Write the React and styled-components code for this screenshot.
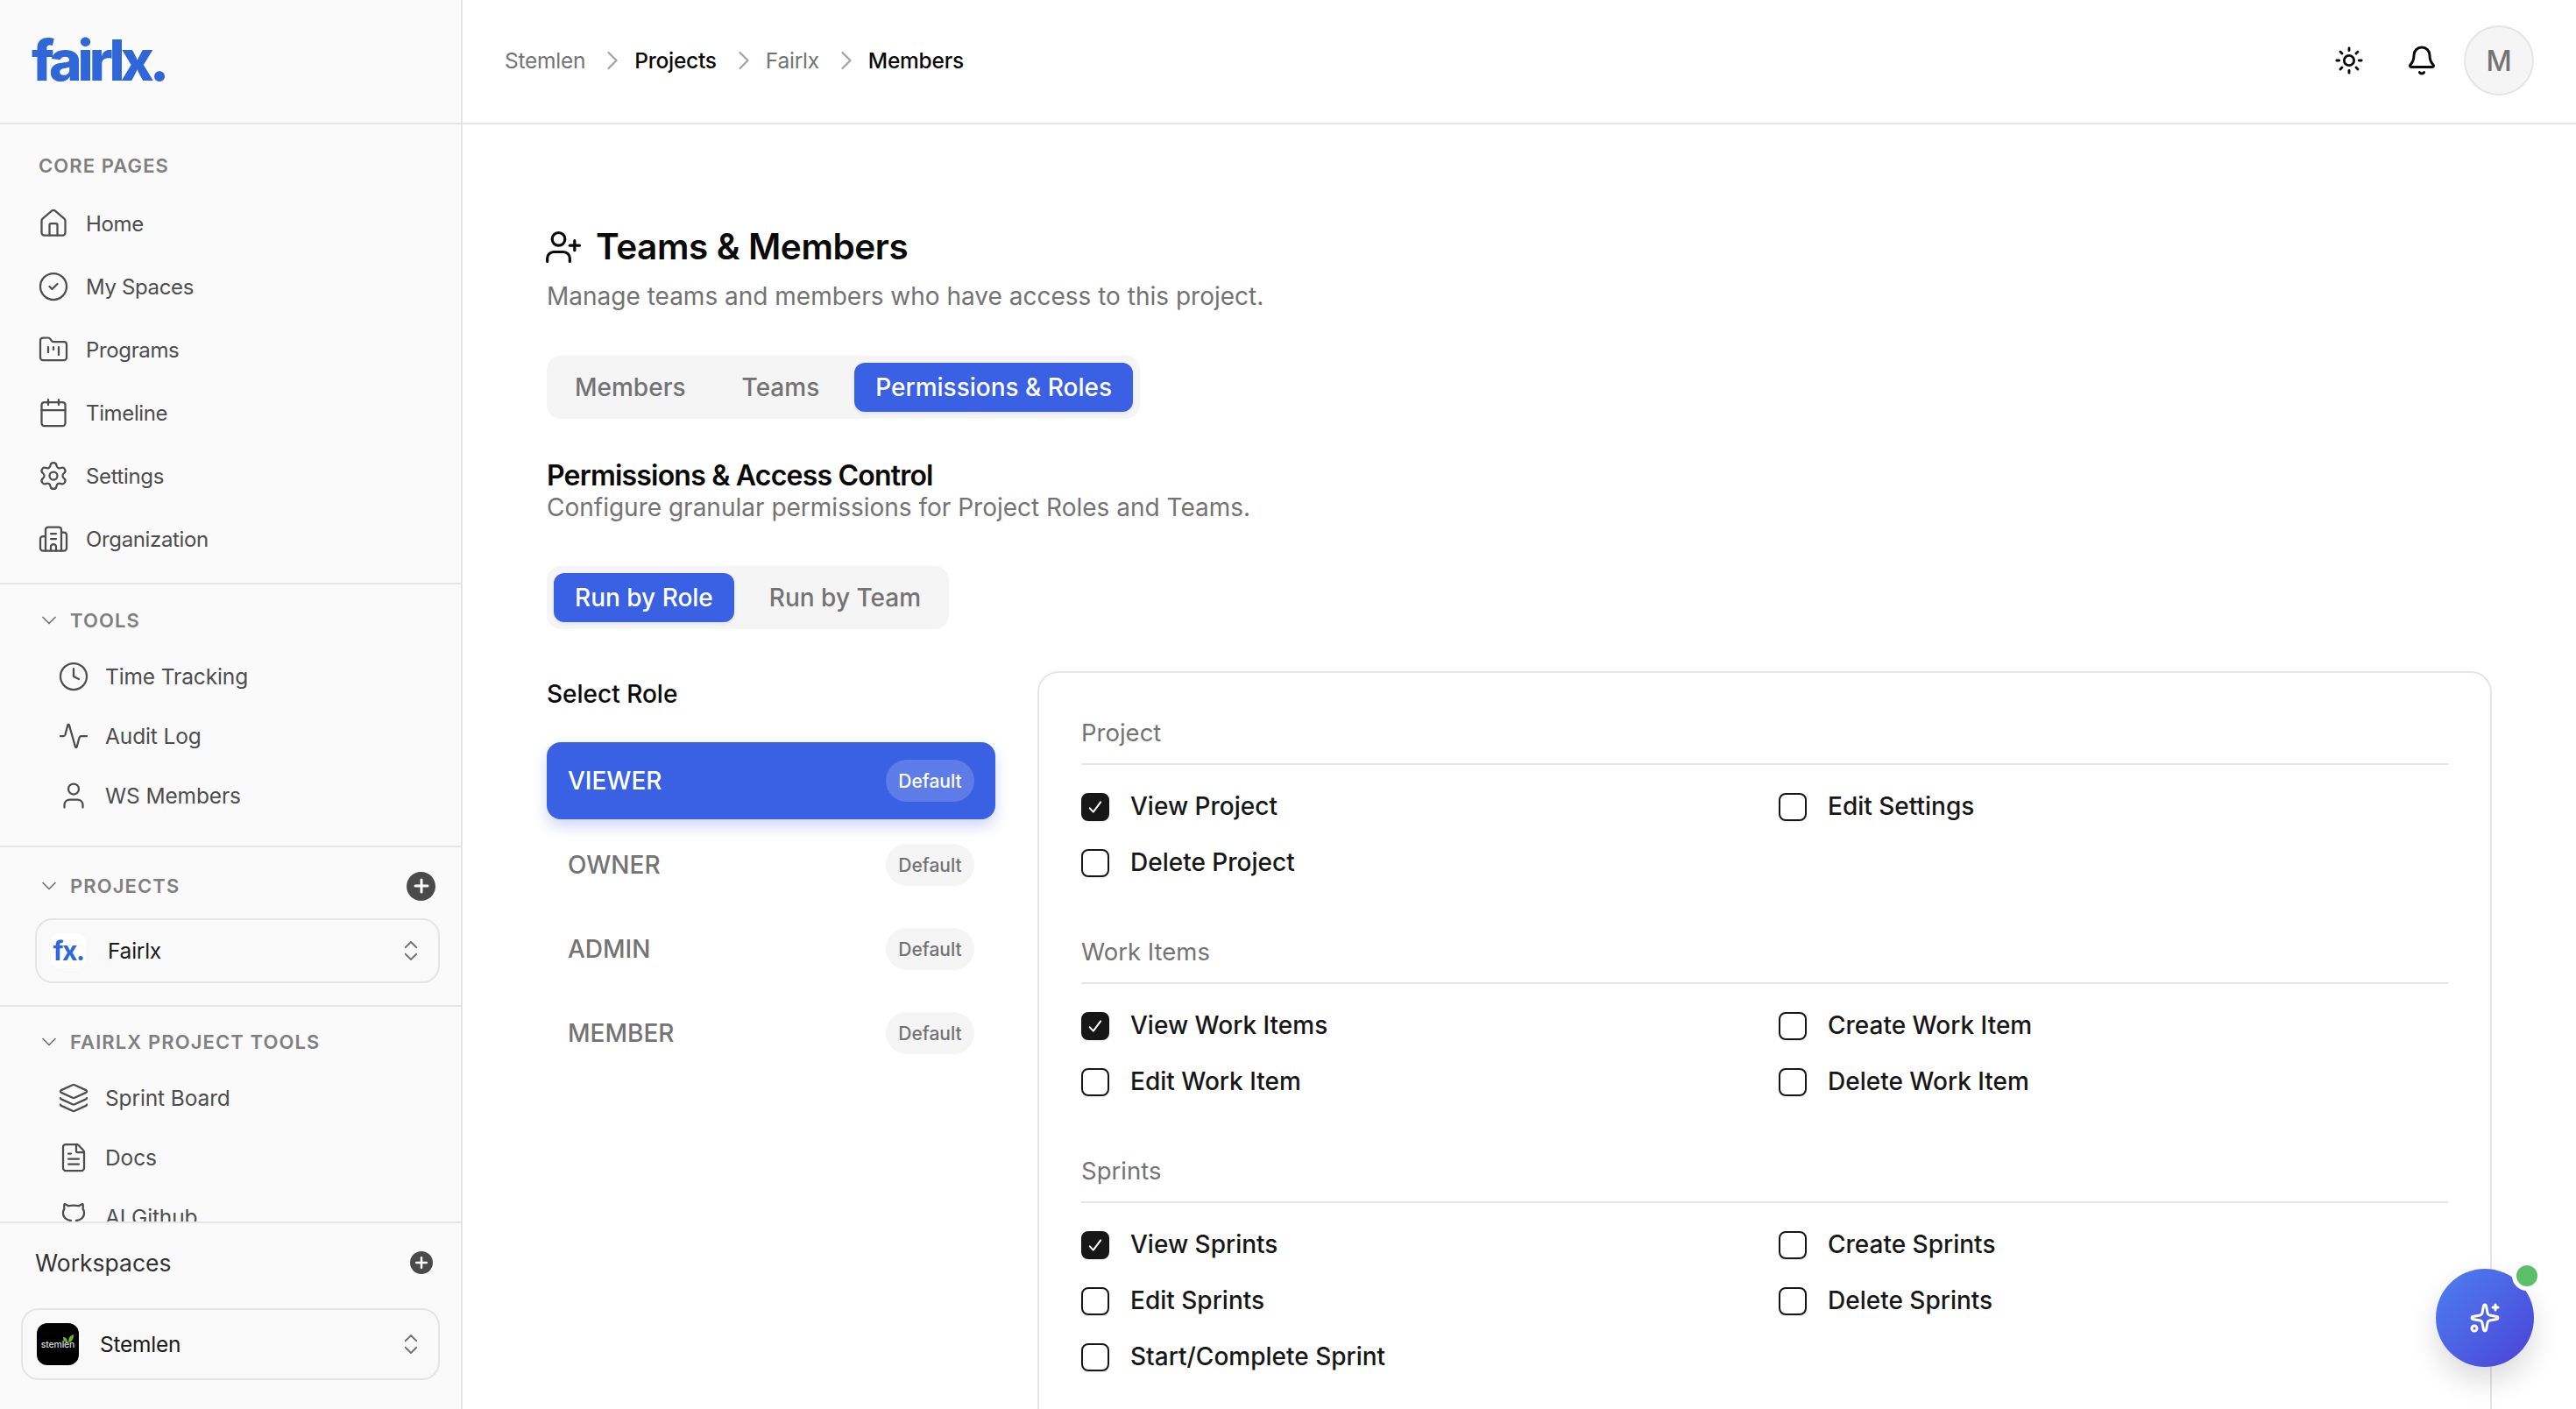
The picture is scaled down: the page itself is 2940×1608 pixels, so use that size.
import styled, { createGlobalStyle } from "styled-components";
import {
  House,
  CircleCheck,
  FolderKanban,
  Calendar,
  Settings,
  Building2,
  Clock,
  User,
  Layers,
  FileText,
  ChevronDown,
  ChevronRight,
  ChevronsUpDown,
  Plus,
  Sun,
  Bell,
  UserPlus,
  Sparkles,
} from "lucide-react";

const GlobalStyle = createGlobalStyle`
  * { box-sizing: border-box; }
  html, body { margin: 0; height: 100%; overflow: hidden; background: #fff; }
  body {
    font-family: Inter, "Noto Sans", "Liberation Sans", sans-serif;
    color: #0a0a0a;
    -webkit-font-smoothing: antialiased;
  }
`;

const Shell = styled.div`
  display: flex;
  height: 100vh;
  overflow: hidden;
  position: relative;
`;

/* sidebar */
const Sidebar = styled.aside`
  width: 528px;
  flex-shrink: 0;
  display: flex;
  flex-direction: column;
  background: #fafafa;
  border-right: 2px solid #e5e5e5;
`;

const LogoBar = styled.div`
  height: 142px;
  flex-shrink: 0;
  display: flex;
  align-items: center;
  padding: 0 0 2px 36px;
  border-bottom: 2px solid #e5e5e5;
`;

const Logo = styled.span`
  font-size: 64px;
  line-height: 1;
  font-weight: 800;
  letter-spacing: -0.078em;
  color: #2f66d8;
`;

const SideScroll = styled.div`
  flex: 1;
  min-height: 0;
  overflow: hidden;
`;

const NavSection = styled.section`
  padding: ${(p) => p.$pad};
  border-bottom: ${(p) => (p.$last ? "none" : "2px solid #e5e5e5")};
`;

const SectionHead = styled.div`
  display: flex;
  align-items: center;
  gap: 10px;
  height: 32px;
  padding: 0 ${(p) => (p.$plain ? "44px" : "29px")} 0 ${(p) => (p.$plain ? "44px" : "42px")};
  margin-bottom: ${(p) => p.$mb || "14px"};
  font-size: 22px;
  font-weight: 600;
  letter-spacing: 0.05em;
  color: #7f7f7f;
  text-transform: uppercase;
  svg { color: #737373; }
`;

const SectionTitle = styled.span`
  flex: 1;
`;

const RoundPlus = styled.span`
  width: ${(p) => p.$size}px;
  height: ${(p) => p.$size}px;
  border-radius: 50%;
  background: #4a4a4a;
  display: flex;
  align-items: center;
  justify-content: center;
  flex-shrink: 0;
  && svg { color: #fff; }
`;

const NavItem = styled.div`
  display: flex;
  align-items: center;
  height: ${(p) => (p.$nested ? "68px" : "72px")};
  padding-left: ${(p) => (p.$nested ? "66px" : "43px")};
  gap: ${(p) => (p.$nested ? "18px" : "19px")};
  font-size: ${(p) => (p.$nested ? "24.5px" : "24px")};
  letter-spacing: ${(p) => (p.$nested ? "-0.005em" : "-0.015em")};
  color: #4d4d4d;
  svg { flex-shrink: 0; color: #4d4d4d; }
`;

const Picker = styled.div`
  display: flex;
  align-items: center;
  margin: ${(p) => p.$margin};
  height: ${(p) => p.$height}px;
  padding: 0 16px;
  background: #f9f9f9;
  border: 2px solid #e5e5e5;
  border-radius: 20px;
  font-size: 24.5px;
  letter-spacing: -0.01em;
  color: #1a1a1a;
  svg { color: #737373; flex-shrink: 0; }
`;

const PickerName = styled.span`
  flex: 1;
`;

const ProjectTile = styled.span`
  width: 40px;
  height: 40px;
  margin-right: 25px;
  border-radius: 10px;
  background: #fff;
  color: #2f66d8;
  font-size: 30px;
  font-weight: 700;
  letter-spacing: -0.05em;
  display: flex;
  align-items: center;
  justify-content: center;
`;

const WorkspaceTile = styled.span`
  width: 48px;
  height: 48px;
  margin-right: 24px;
  border-radius: 12px;
  background: #000;
  color: #d9d9d9;
  font-size: 10.5px;
  font-weight: 500;
  letter-spacing: -0.02em;
  display: flex;
  align-items: center;
  justify-content: center;
  position: relative;
  svg { position: absolute; top: 13px; right: 5px; color: #6cb52d; }
`;

const Footer = styled.div`
  height: 214px;
  flex-shrink: 0;
  background: #fafafa;
  border-top: 2px solid #e5e5e5;
`;

const FooterHead = styled.div`
  display: flex;
  align-items: center;
  justify-content: space-between;
  height: 40px;
  margin: 25px 32px 32px 40px;
  font-size: 26.5px;
  color: #333;
`;

/* main */
const Main = styled.main`
  flex: 1;
  min-width: 0;
  display: flex;
  flex-direction: column;
`;

const TopBar = styled.header`
  height: 142px;
  flex-shrink: 0;
  display: flex;
  align-items: center;
  padding: 0 48px 2px 48px;
  border-bottom: 2px solid #e5e5e5;
`;

const Crumbs = styled.nav`
  flex: 1;
  display: flex;
  align-items: center;
  gap: 10px;
  font-size: 24.5px;
  letter-spacing: -0.01em;
  svg { color: #a3a3a3; margin: 0 -3px 0 3px; }
`;

const Crumb = styled.span`
  color: ${(p) => (p.$strong ? "#0a0a0a" : "#737373")};
  font-weight: ${(p) => (p.$strong ? 500 : 400)};
`;

const TopActions = styled.div`
  display: flex;
  align-items: center;
  svg { color: #0a0a0a; }
`;

const IconSlot = styled.span`
  display: flex;
  margin-right: ${(p) => p.$mr}px;
`;

const Avatar = styled.span`
  width: 80px;
  height: 80px;
  border-radius: 50%;
  background: #f5f5f5;
  border: 2px solid #e5e5e5;
  color: #737373;
  font-size: 32px;
  font-weight: 500;
  display: flex;
  align-items: center;
  justify-content: center;
`;

const Content = styled.div`
  flex: 1;
  min-height: 0;
  overflow: hidden;
  padding: 112px 96px 0;
`;

const PageTitle = styled.h1`
  display: flex;
  align-items: center;
  gap: 15px;
  margin: 0;
  height: 56px;
  font-size: 40.5px;
  line-height: 56px;
  font-weight: 600;
  letter-spacing: -0.01em;
  svg { margin-left: -3px; }
`;

const PageSub = styled.p`
  margin: 8px 0 0;
  font-size: 28px;
  line-height: 40px;
  color: #737373;
`;

const Segments = styled.div`
  display: inline-flex;
  align-items: center;
  height: 72px;
  padding: 0 8px;
  gap: 16px;
  margin-top: ${(p) => p.$mt}px;
  border-radius: 16px;
  background: #f5f5f5;
  vertical-align: top;
`;

const Segment = styled.span`
  height: 56px;
  display: flex;
  align-items: center;
  padding: 0 24px;
  border-radius: 12px;
  font-size: 28px;
  font-weight: 500;
  color: ${(p) => (p.$active ? "#fff" : "#737373")};
  background: ${(p) => (p.$active ? "#3a60e3" : "transparent")};
  box-shadow: ${(p) => (p.$active ? "0 2px 4px rgba(0,0,0,.08)" : "none")};
`;

const BlockTitle = styled.h2`
  margin: 47px 0 0;
  font-size: 32px;
  line-height: 36px;
  font-weight: 600;
  letter-spacing: -0.025em;
`;

const BlockSub = styled.p`
  margin: 0;
  font-size: 28px;
  line-height: 37px;
  color: #737373;
`;

const Columns = styled.div`
  display: grid;
  grid-template-columns: 512px 1fr;
  gap: 48px;
  margin-top: 48px;
  align-items: start;
`;

const RoleColumn = styled.div`
  padding-top: 6px;
`;

const RoleHeading = styled.div`
  font-size: 28px;
  line-height: 40px;
  font-weight: 500;
  margin-bottom: 35px;
`;

const RoleList = styled.div`
  display: flex;
  flex-direction: column;
  gap: 8px;
`;

const RoleRow = styled.div`
  height: 88px;
  display: flex;
  align-items: center;
  justify-content: space-between;
  padding: 0 24px;
  border-radius: 16px;
  font-size: 28px;
  font-weight: 500;
  color: ${(p) => (p.$active ? "#fff" : "#737373")};
  background: ${(p) => (p.$active ? "#3a60e3" : "transparent")};
  box-shadow: ${(p) => (p.$active ? "0 8px 16px rgba(58,96,227,.25)" : "none")};
`;

const Badge = styled.span`
  height: 48px;
  width: 101px;
  display: flex;
  align-items: center;
  justify-content: center;
  border-radius: 24px;
  font-size: 21px;
  font-weight: 500;
  color: ${(p) => (p.$active ? "#fff" : "#737373")};
  background: ${(p) => (p.$active ? "rgba(255,255,255,.18)" : "#f5f5f5")};
`;

const Panel = styled.div`
  padding: 48px 48px 60px;
  border: 2px solid #e5e5e5;
  border-radius: 24px;
  background: #fff;
`;

const Group = styled.div`
  margin-bottom: 62px;
`;

const GroupTitle = styled.div`
  padding-bottom: 15px;
  border-bottom: 2px solid #e5e5e5;
  margin-bottom: 27px;
  font-size: 27.5px;
  line-height: 40px;
  color: #737373;
`;

const PermGrid = styled.div`
  display: grid;
  grid-template-columns: 1fr 1fr;
  column-gap: 32px;
  row-gap: 24px;
`;

const Perm = styled.label`
  display: flex;
  align-items: center;
  gap: 24px;
  height: 40px;
  font-size: 28px;
  font-weight: 500;
  color: #171717;
`;

const Box = styled.span`
  width: 32px;
  height: 32px;
  margin-top: 2px;
  border-radius: 8px;
  border: 2.5px solid #171717;
  background: ${(p) => (p.$on ? "#171717" : "#fff")};
  color: #fff;
  box-shadow: 0 1px 2px rgba(0, 0, 0, 0.1);
  display: flex;
  align-items: center;
  justify-content: center;
  flex-shrink: 0;
`;

const Fab = styled.button`
  position: absolute;
  left: 2780px;
  top: 1448px;
  width: 112px;
  height: 112px;
  padding: 0;
  border: 0;
  border-radius: 50%;
  color: #fff;
  background: linear-gradient(135deg, #4f80f1, #4a43d6);
  box-shadow: 0 16px 32px rgba(0, 0, 0, 0.14);
  display: flex;
  align-items: center;
  justify-content: center;
`;

const FabDot = styled.span`
  position: absolute;
  right: -9px;
  top: -9px;
  width: 34px;
  height: 34px;
  border-radius: 50%;
  background: #5cc06b;
  border: 5px solid #fff;
`;

const ico = { size: 36, strokeWidth: 1.5 };

const Pulse = () => (
  <svg width="36" height="36" viewBox="0 0 24 24" fill="none" stroke="currentColor" strokeWidth="1.5" strokeLinecap="round" strokeLinejoin="round">
    <path d="M2 12h2.2c.7 0 1.2-.4 1.4-1l2-7.4c.1-.5.9-.5 1 0l4.8 16.800c.1.500.9.500 1 0l2-7.400c.2-.6.700-1 1.400-1H22" />
  </svg>
);

const GithubCat = () => (
  <svg width="36" height="36" viewBox="0 0 24 24" fill="none" stroke="currentColor" strokeWidth="1.5" strokeLinecap="round" strokeLinejoin="round">
    <path d="M15 22v-4a4.8 4.8 0 0 0-1-3.500c3 0 6-2 6-5.500.08-1.250-.27-2.480-1-3.500.28-1.150.28-2.350 0-3.500 0 0-1 0-3 1.500-2.640-.5-5.360-.5-8 0C6 2 5 2 5 2c-.3 1.150-.3 2.350 0 3.500A5.403 5.403 0 0 0 4 9c0 3.500 3 5.500 6 5.500-.39.490-.68 1.050-.85 1.650-.17.600-.22 1.230-.15 1.850v4" />
  </svg>
);

const Tick = () => (
  <svg width="18" height="18" viewBox="0 0 16 16" fill="none" stroke="currentColor" strokeWidth="1.8" strokeLinecap="round" strokeLinejoin="round">
    <path d="M2.5 9.200 6 13 13.500 3" />
  </svg>
);

const corePages = [
  ["Home", <House {...ico} key="i" />],
  ["My Spaces", <CircleCheck {...ico} key="i" />],
  ["Programs", <FolderKanban {...ico} key="i" />],
  ["Timeline", <Calendar {...ico} key="i" />],
  ["Settings", <Settings {...ico} key="i" />],
  ["Organization", <Building2 {...ico} key="i" />],
];

const tools = [
  ["Time Tracking", <Clock {...ico} key="i" />],
  ["Audit Log", <Pulse key="i" />],
  ["WS Members", <User {...ico} key="i" />],
];

const projectTools = [
  ["Sprint Board", <Layers {...ico} key="i" />],
  ["Docs", <FileText {...ico} key="i" />],
  ["AI Github", <GithubCat key="i" />],
];

const roles = ["VIEWER", "OWNER", "ADMIN", "MEMBER"];

const groups = [
  { title: "Project", items: [["View Project", true], ["Edit Settings"], ["Delete Project"]] },
  { title: "Work Items", items: [["View Work Items", true], ["Create Work Item"], ["Edit Work Item"], ["Delete Work Item"]] },
  { title: "Sprints", items: [["View Sprints", true], ["Create Sprints"], ["Edit Sprints"], ["Delete Sprints"], ["Start/Complete Sprint"]] },
];

const Nav = ({ items, nested }) =>
  items.map(([label, icon]) => (
    <NavItem key={label} $nested={nested}>
      {icon}
      {label}
    </NavItem>
  ));

const App = () => {
  return (
    <Shell>
      <GlobalStyle />
      <Sidebar>
        <LogoBar>
          <Logo>fairlx.</Logo>
        </LogoBar>
        <SideScroll>
          <NavSection $pad="31px 0 14px">
            <SectionHead $plain>Core Pages</SectionHead>
            <Nav items={corePages} />
          </NavSection>
          <NavSection $pad="25px 0 23px">
            <SectionHead>
              <ChevronDown size={28} strokeWidth={1.5} />
              <SectionTitle>Tools</SectionTitle>
            </SectionHead>
            <Nav items={tools} nested />
          </NavSection>
          <NavSection $pad="28px 0 25px">
            <SectionHead $mb="21px">
              <ChevronDown size={28} strokeWidth={1.5} />
              <SectionTitle>Projects</SectionTitle>
              <RoundPlus $size={33}>
                <Plus size={24} strokeWidth={3} />
              </RoundPlus>
            </SectionHead>
            <Picker $margin="0 24px 0 40px" $height={74}>
              <ProjectTile>fx.</ProjectTile>
              <PickerName>Fairlx</PickerName>
              <ChevronsUpDown size={30} strokeWidth={1.5} />
            </Picker>
          </NavSection>
          <NavSection $pad="24px 0 0" $last>
            <SectionHead>
              <ChevronDown size={28} strokeWidth={1.5} />
              <SectionTitle>Fairlx Project Tools</SectionTitle>
            </SectionHead>
            <Nav items={projectTools} nested />
          </NavSection>
        </SideScroll>
        <Footer>
          <FooterHead>
            Workspaces
            <RoundPlus $size={26}>
              <Plus size={20} strokeWidth={3} />
            </RoundPlus>
          </FooterHead>
          <Picker $margin="0 24px" $height={82}>
            <WorkspaceTile>
              stemlen
              <svg width="14" height="10" viewBox="0 0 14 10">
                <path d="M1 3c3 0 5 2 5 6C3 9 1 7 1 3zM13 0c0 5-2 9-6 9 0-5 2-8 6-9z" fill="currentColor" />
              </svg>
            </WorkspaceTile>
            <PickerName>Stemlen</PickerName>
            <ChevronsUpDown size={30} strokeWidth={1.5} />
          </Picker>
        </Footer>
      </Sidebar>

      <Main>
        <TopBar>
          <Crumbs>
            <Crumb>Stemlen</Crumb>
            <ChevronRight size={36} strokeWidth={1.5} />
            <Crumb $strong>Projects</Crumb>
            <ChevronRight size={36} strokeWidth={1.5} />
            <Crumb>Fairlx</Crumb>
            <ChevronRight size={36} strokeWidth={1.5} />
            <Crumb $strong>Members</Crumb>
          </Crumbs>
          <TopActions>
            <IconSlot $mr={48}>
              <Sun size={34} strokeWidth={2} />
            </IconSlot>
            <IconSlot $mr={30}>
              <Bell size={36} strokeWidth={2} />
            </IconSlot>
            <Avatar>M</Avatar>
          </TopActions>
        </TopBar>
        <Content>
          <PageTitle>
            <UserPlus size={44} strokeWidth={1.75} />
            Teams &amp; Members
          </PageTitle>
          <PageSub>Manage teams and members who have access to this project.</PageSub>
          <Segments $mt={48}>
            <Segment>Members</Segment>
            <Segment>Teams</Segment>
            <Segment $active>Permissions &amp; Roles</Segment>
          </Segments>
          <BlockTitle>Permissions &amp; Access Control</BlockTitle>
          <BlockSub>Configure granular permissions for Project Roles and Teams.</BlockSub>
          <Segments $mt={48}>
            <Segment $active>Run by Role</Segment>
            <Segment>Run by Team</Segment>
          </Segments>
          <Columns>
            <RoleColumn>
              <RoleHeading>Select Role</RoleHeading>
              <RoleList>
                {roles.map((role, i) => (
                  <RoleRow key={role} $active={i === 0}>
                    {role}
                    <Badge $active={i === 0}>Default</Badge>
                  </RoleRow>
                ))}
              </RoleList>
            </RoleColumn>
            <Panel>
              {groups.map((group) => (
                <Group key={group.title}>
                  <GroupTitle>{group.title}</GroupTitle>
                  <PermGrid>
                    {group.items.map(([label, on]) => (
                      <Perm key={label}>
                        <Box $on={on}>{on && <Tick />}</Box>
                        {label}
                      </Perm>
                    ))}
                  </PermGrid>
                </Group>
              ))}
            </Panel>
          </Columns>
        </Content>
      </Main>

      <Fab>
        <Sparkles size={36} strokeWidth={2} />
        <FabDot />
      </Fab>
    </Shell>
  );
};

export default App;
